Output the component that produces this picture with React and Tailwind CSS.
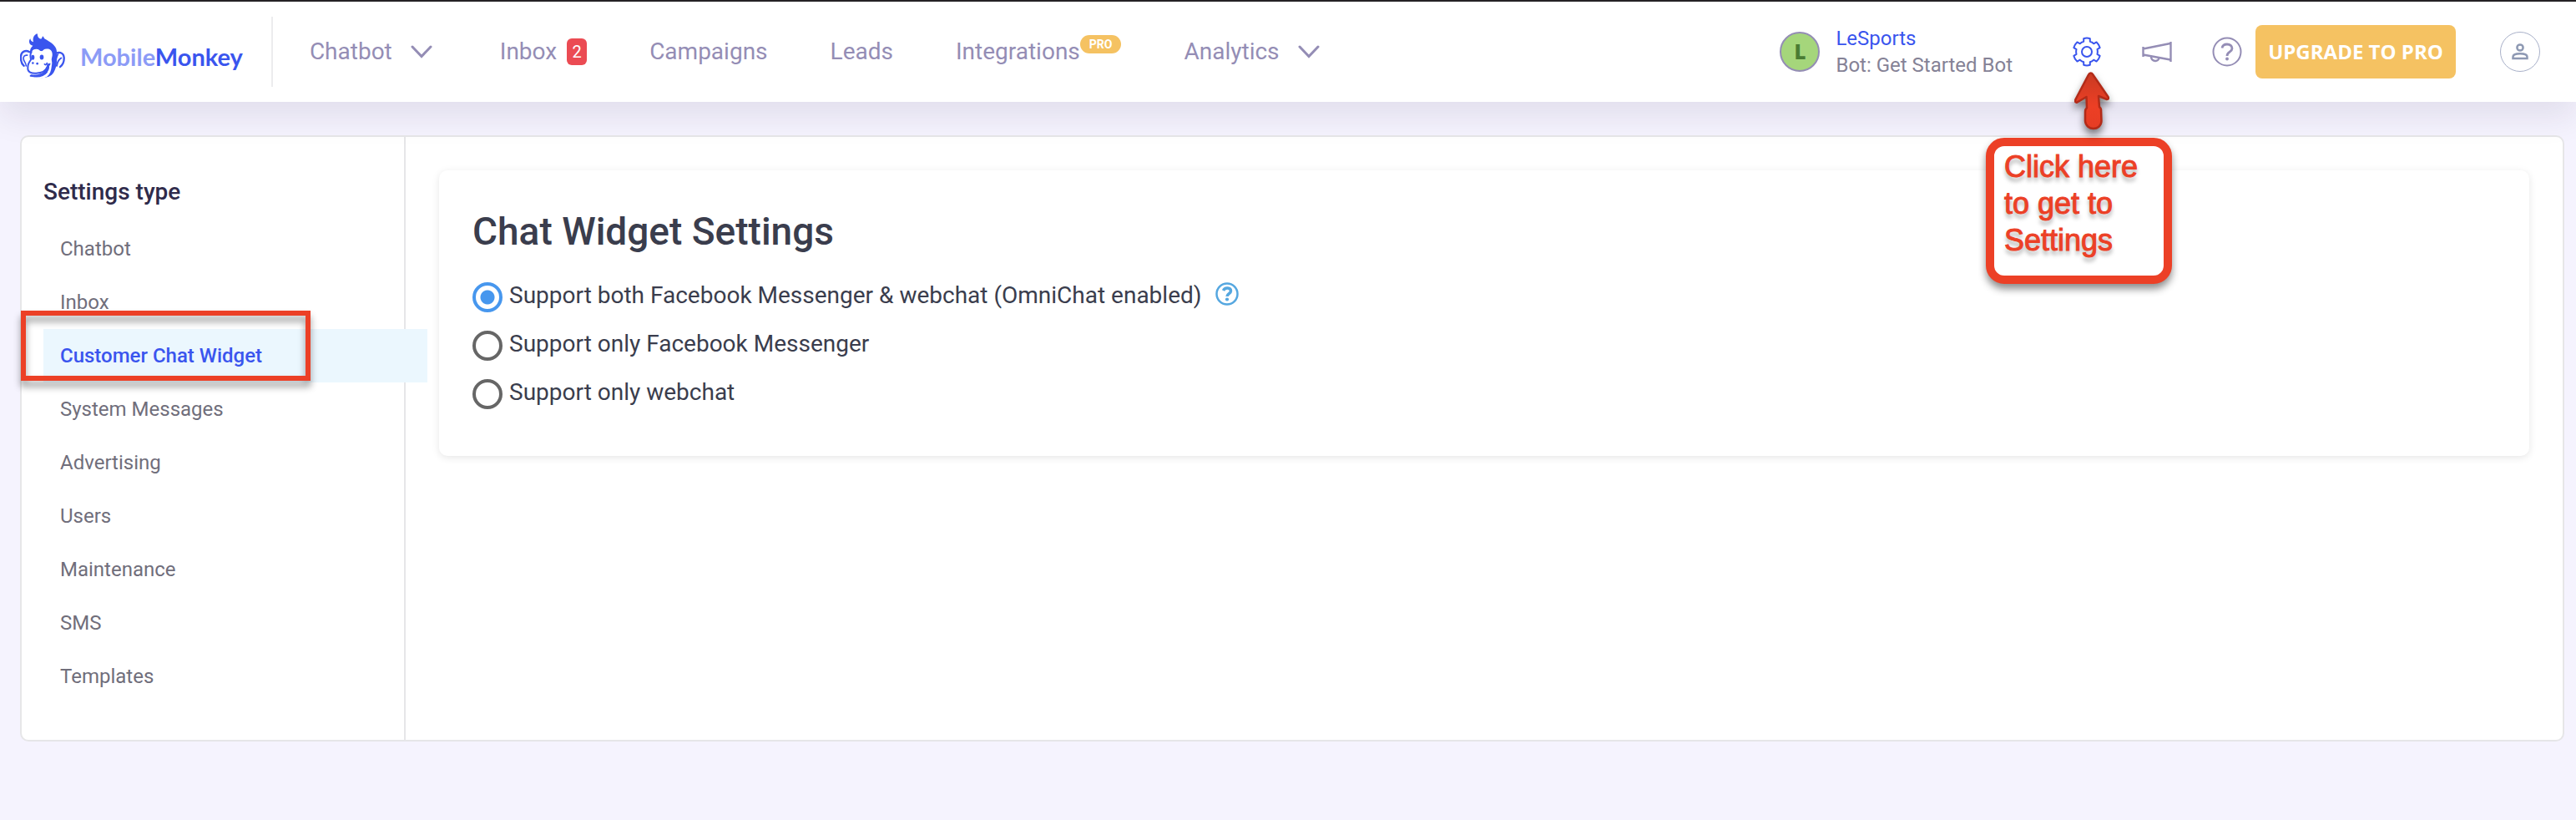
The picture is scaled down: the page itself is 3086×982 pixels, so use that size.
import { useState } from 'react';

const settingsTypes = [
  'Chatbot',
  'Inbox',
  'Customer Chat Widget',
  'System Messages',
  'Advertising',
  'Users',
  'Maintenance',
  'SMS',
  'Templates',
];

const supportOptions = [
  { id: 'omnichat', label: 'Support both Facebook Messenger & webchat (OmniChat enabled)', help: true },
  { id: 'messenger', label: 'Support only Facebook Messenger' },
  { id: 'webchat', label: 'Support only webchat' },
];

const MonkeyLogo = () => (
  <svg viewBox="24 18 162 170" className="w-[54px] h-[57px] shrink-0" fill="none" aria-hidden="true">
    {/* ears */}
    <path d="M58 84C44 76 28 82 27 100c-1 16 4 28 11 34" stroke="#3a55ee" strokeWidth="7" strokeLinecap="round" />
    <path d="M50 96c-10-2-16 6-13 16 2 8 8 10 9 22" stroke="#3a55ee" strokeWidth="5" strokeLinecap="round" />
    <path d="M150 92c10-10 30-8 32 12 1 16-6 28-14 34" stroke="#3a55ee" strokeWidth="7" strokeLinecap="round" />
    <path d="M172 106c-6 4-14 12-16 28" stroke="#3a55ee" strokeWidth="6" strokeLinecap="round" />
    {/* hair and back of the head */}
    <path
      d="M60 88c-1-12 3-20 10-26-8-2-14-8-13-16 0-5 2-8 4-10 1 7 5 10 11 12-4-14 2-26 14-30 2 7 0 10 6 16 3 3 7 4 9 2 3-4 3-6 4-9 5 2 5 8 8 10 14 8 34 18 41 36 3 10 2 14 2 21 4-4 6-5 8-5-4 11-8 18-8 28 0 14-4 28-11 41-8 14-24 19-44 19-22 0-42-4-42-23 2-5 8-3 16-1l40-30 18-20-6-20-50-4z"
      fill="#3a55ee"
    />
    {/* face */}
    <path
      d="M64 100c-2-16 6-26 18-26 10 0 15 6 18 12 5-8 12-15 24-13 13 2 17 12 16 24-1 8-4 12-2 20 2 6 0 14-1 22-1 12-6 26-16 34-12 8-44 8-53-3 18 2 40 2 53-12 7-8 9-16 8-24 3-1 5-4 4-10-4 2-8 3-12 2 0 8-2 12-5 16-4 14-14 22-36 24-18 1-30-4-31-18-1-10 4-14 8-22 5-8 8-16 7-26z"
      fill="#fff"
    />
    <path
      d="M65 84c-6 8-4 18-2 28-8 12-12 18-11 32 0 12 12 18 30 17 22-2 36-10 41-24"
      stroke="#3a55ee"
      strokeWidth="6"
      strokeLinecap="round"
    />
    <path d="M62 170c26 5 48 0 58-14" stroke="#3a55ee" strokeWidth="6" strokeLinecap="round" />
    <path d="M112 128c3 4 6 3 9-4" stroke="#3a55ee" strokeWidth="5" strokeLinecap="round" />
    <ellipse cx="70" cy="104" rx="6" ry="9" fill="#3a55ee" />
    <ellipse cx="102" cy="103" rx="7" ry="9" fill="#3a55ee" />
    <circle cx="70" cy="124" r="4" fill="#3a55ee" />
    <circle cx="86" cy="126" r="4" fill="#3a55ee" />
  </svg>
);

const Chevron = () => (
  <svg viewBox="0 0 26 16" className="w-[26px] h-4" fill="none" aria-hidden="true">
    <path d="M2 2l11 11.500L24 2" stroke="#948db5" strokeWidth="3" strokeLinecap="round" />
  </svg>
);

const GearIcon = () => (
  <svg viewBox="0 0 36 36" className="w-9 h-9" fill="none" stroke="#3a55ee" strokeWidth="2" strokeLinejoin="round" aria-hidden="true">
    <path d="M14.200 2.200q3.800-1.400 7.600 0v3.600c1.800.5 3 1.200 4.400 2.500l3.400-1.900c2 1.800 3.300 4 4 6.700l-3.100 2c.5 2 .5 3.800 0 5.800l3.100 2c-.7 2.700-2 4.900-4 6.700l-3.400-1.900c-1.400 1.300-2.600 2-4.400 2.500v3.600q-3.800 1.400-7.600 0v-3.600c-1.800-.5-3-1.200-4.400-2.500l-3.400 1.900c-2-1.800-3.300-4-4-6.700l3.100-2c-.5-2-.5-3.800 0-5.800l-3.100-2c.7-2.700 2-4.900 4-6.700l3.400 1.900c1.400-1.300 2.600-2 4.400-2.500z" />
    <circle cx="18" cy="18" r="6" />
  </svg>
);

const MegaphoneIcon = () => (
  <svg viewBox="0 0 36 26" className="w-9 h-[26px]" fill="none" stroke="#948db5" strokeWidth="2.400" aria-hidden="true">
    <path d="M1.500 7v12M34.500 1v24M1.500 9.500L34 3M1.500 16.500L34 22.500" />
    <path d="M11 18.500c0 7 9.500 7 9.500 1.500" />
  </svg>
);

const HelpIcon = () => (
  <svg viewBox="0 0 36 36" className="w-9 h-9" fill="none" stroke="#948db5" aria-hidden="true">
    <circle cx="18" cy="18" r="16.500" strokeWidth="2" />
    <path d="M12 13.500c.5-3 3-4.500 6-4.500 3.500 0 6 2 6 5 0 4.500-6 4-6 9" strokeWidth="2.800" />
    <circle cx="18" cy="26.500" r="1.900" fill="#948db5" stroke="none" />
  </svg>
);

const UserIcon = () => (
  <svg viewBox="0 0 20 20" className="w-5 h-5" fill="none" stroke="#8e99b3" strokeWidth="2.500" aria-hidden="true">
    <circle cx="10" cy="5" r="3.600" />
    <path d="M1.500 18v-2c0-5 17-5 17 0v2z" />
  </svg>
);

const SmallHelpIcon = () => (
  <svg viewBox="0 0 28 28" className="w-7 h-7" fill="none" stroke="#55a7e0" aria-hidden="true">
    <circle cx="14" cy="14" r="12.500" strokeWidth="2.500" />
    <path d="M9.500 10c2-4.500 9-3.500 9 .5 0 3.500-4.500 3-4.500 6.500" strokeWidth="3.500" />
    <circle cx="14" cy="20.500" r="2.100" fill="#55a7e0" stroke="none" />
  </svg>
);

const RedArrow = () => (
  <svg viewBox="0 0 42 70" className="w-[42px] h-[70px] drop-shadow-[0_6px_5px_rgba(0,0,0,0.5)]" aria-hidden="true">
    <defs>
      <linearGradient id="arrowFill" x1="0" y1="0" x2="0" y2="1">
        <stop offset="0" stopColor="#c93a22" />
        <stop offset="0.6" stopColor="#ec3f25" />
        <stop offset="1" stopColor="#e63d24" />
      </linearGradient>
    </defs>
    <path
      d="M19.500 1.500c-1 0-2 1-2.500 2L1.500 33c-1 3 0 4 2 3.500L14.500 30l.5 13c-2 2-2 3-2 5v11c1 12 19 12 19.500 0l-.5-14c0-1-1-2-2-3l-1-13 10 4c2 0 2.500-1 1.500-3L22 3c-.5-1-1.500-1.500-2.500-1.500z"
      fill="url(#arrowFill)"
      stroke="#b22b18"
      strokeWidth="2.500"
      strokeLinejoin="round"
    />
  </svg>
);

const Header = () => (
  <header className="relative z-10 flex items-center h-[122px] pl-6 pr-[43px] bg-white border-t-2 border-[#242225] shadow-[0_18px_36px_rgba(30,20,50,0.09)]">
    <a href="#home" className="flex items-center gap-[18px] pr-[34px] pt-3 font-['Lato',sans-serif] font-bold text-[29px] leading-8">
      <MonkeyLogo />
      <span className="text-[#8c9bf6]">
        Mobile<span className="text-[#3a55ee]">Monkey</span>
      </span>
    </a>
    <div className="w-[2px] h-[84px] bg-[#ececee]" />

    <nav className="flex items-center gap-[75px] pl-11 text-[28px] leading-8 text-[#948db5]">
      <button type="button" className="flex items-center gap-[22px] pr-[6px] cursor-pointer">
        Chatbot <Chevron />
      </button>
      <a href="#inbox" className="flex items-center gap-3">
        Inbox
        <span className="w-6 h-8 rounded-md bg-[#eb4b53] text-white text-xl leading-8 text-center">2</span>
      </a>
      <a href="#campaigns">Campaigns</a>
      <a href="#leads">Leads</a>
      <a href="#integrations" className="flex items-start">
        Integrations
        <span className="h-[22px] -mt-1 px-[11px] rounded-full bg-[#f5c262] text-white text-sm leading-[22px] font-bold">PRO</span>
      </a>
      <button type="button" className="flex items-center gap-[22px] cursor-pointer">
        Analytics <Chevron />
      </button>
    </nav>

    <div className="flex items-center ml-auto">
      <span className="flex items-center justify-center w-12 h-12 rounded-full border-2 border-[#948db5] bg-[#a5d67b] text-[#4a7c33] font-['Open_Sans',sans-serif] font-extrabold text-2xl">
        L
      </span>
      <div className="ml-[19px] mr-[71px] text-2xl leading-8">
        <a href="#page" className="block text-[#3a55ee]">LeSports</a>
        <p className="text-[#858296]">Bot: Get Started Bot</p>
      </div>

      <div className="relative mr-12">
        <button type="button" aria-label="Settings" className="block cursor-pointer">
          <GearIcon />
        </button>
        <div className="absolute top-[42px] left-[3px] z-10">
          <RedArrow />
        </div>
        <p className="absolute top-[121px] right-[-84px] w-[223px] h-[175px] pl-3 pt-[3px] rounded-[22px] border-10 border-[#ec4026] bg-white text-[#ec4026] font-['Liberation_Sans',sans-serif] text-4xl leading-11 [-webkit-text-stroke:1px_#ec4026] [text-shadow:0_5px_5px_rgba(0,0,0,0.35)] shadow-[0_6px_10px_rgba(0,0,0,0.45)]">
          Click here<br />to get to<br />Settings
        </p>
      </div>
      <button type="button" aria-label="Announcements" className="mr-12 cursor-pointer">
        <MegaphoneIcon />
      </button>
      <button type="button" aria-label="Help" className="mr-4 cursor-pointer">
        <HelpIcon />
      </button>
      <button type="button" className="w-60 h-16 rounded-lg bg-[#f5c262] text-white font-['Open_Sans',sans-serif] font-bold text-2xl cursor-pointer">
        UPGRADE TO PRO
      </button>
      <button type="button" aria-label="Account" className="flex items-center justify-center w-12 h-12 ml-[53px] rounded-full border border-[#a9b1c9] cursor-pointer">
        <UserIcon />
      </button>
    </div>
  </header>
);

const Sidebar = ({ selected, onSelect }) => (
  <aside className="w-[460px] shrink-0 pl-[26px] pt-[50px] pb-11 border-r-2 border-[#e6e6e8]">
    <h2 className="mb-5 text-[28px] leading-8 font-medium text-[#2f2b4b]">Settings type</h2>
    <ul className="-mr-[28px] text-2xl">
      {settingsTypes.map((name) => (
        <li key={name} className="relative">
          <button
            type="button"
            onClick={() => onSelect(name)}
            className={`block w-full h-16 pl-5 text-left cursor-pointer ${
              name === selected ? 'bg-[#ebf7fe] text-[#3a55ee] font-medium' : 'text-[#706e7b]'
            }`}
          >
            {name}
          </button>
          {name === 'Customer Chat Widget' && (
            <div className="absolute -top-[22px] -left-[27px] w-[347px] h-[84px] border-6 border-[#ec4026] pointer-events-none drop-shadow-[0_7px_4px_rgba(0,0,0,0.4)]" />
          )}
        </li>
      ))}
    </ul>
  </aside>
);

export default function App() {
  const [selected, setSelected] = useState('Customer Chat Widget');
  const [support, setSupport] = useState('omnichat');

  return (
    <div className="min-h-screen bg-[#f5f3fe] font-['Roboto',sans-serif]">
      <Header />
      <main className="flex mt-10 ml-6 mr-[14px] bg-white border-2 border-[#e6e6e8] rounded-[10px]">
        <Sidebar selected={selected} onSelect={setSelected} />

        <div className="flex-1 p-10">
          <section className="px-10 pt-[46px] pb-14 rounded-[10px] shadow-[0_2px_10px_rgba(0,0,0,0.1)] text-[#3a3d4d]">
            <h1 className="mb-[34px] text-[46px] leading-[54px] font-medium">Chat Widget Settings</h1>
            <div className="space-y-[22px]">
              {supportOptions.map(({ id, label, help }) => (
                <div key={id} className="flex items-center h-9">
                  <input
                    id={id}
                    type="radio"
                    name="support"
                    checked={support === id}
                    onChange={() => setSupport(id)}
                    className="appearance-none w-9 h-9 mr-2 rounded-full border-4 border-[#666] checked:border-[#4797ee] checked:bg-[radial-gradient(circle,#4797ee_8px,transparent_9px)]"
                  />
                  <label htmlFor={id} className="pb-1 text-[28px] leading-8">{label}</label>
                  {help && (
                    <button type="button" aria-label="About OmniChat" className="ml-4 pb-2 cursor-pointer">
                      <SmallHelpIcon />
                    </button>
                  )}
                </div>
              ))}
            </div>
          </section>
        </div>
      </main>
    </div>
  );
}
